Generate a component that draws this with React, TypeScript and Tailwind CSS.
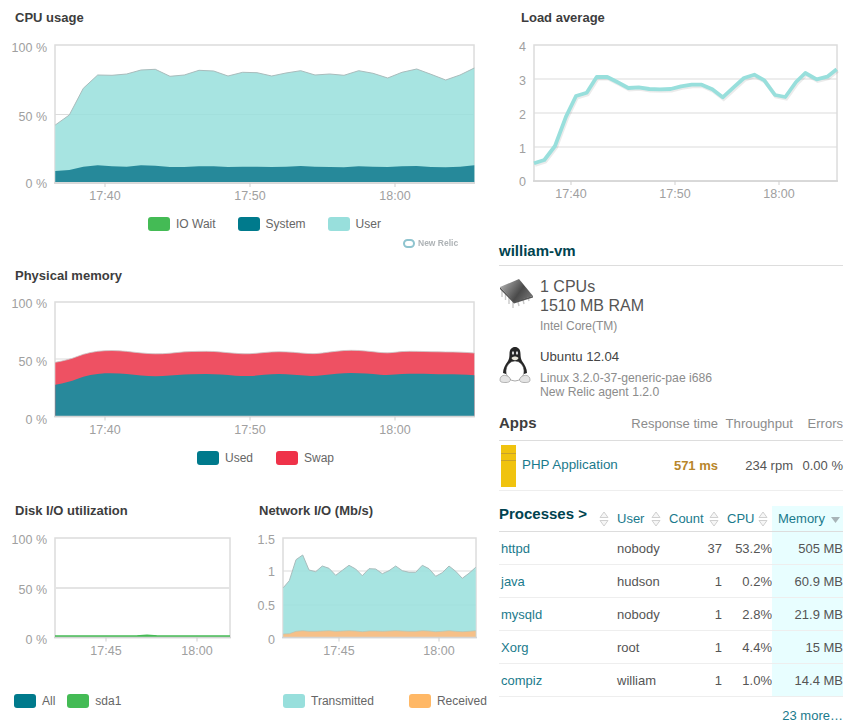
import React from "react";

type P = number[][];
const z = (pts: P, ox: number, oy: number) => pts.map(([x, y]) => [x / 3 + ox, y / 3 + oy]);
const line = (pts: P) => pts.map(([x, y]) => `${x.toFixed(1)},${y.toFixed(1)}`).join(" ");
const area = (pts: P, bottom: number) =>
  `${pts[0][0].toFixed(1)},${bottom} ${line(pts)} ${pts[pts.length - 1][0].toFixed(1)},${bottom}`;
const smooth = (pts: P) => {
  let d = `M${pts[0][0].toFixed(1)} ${pts[0][1].toFixed(1)}`;
  for (let i = 1; i < pts.length - 1; i++) {
    const mx = (pts[i][0] + pts[i + 1][0]) / 2;
    const my = (pts[i][1] + pts[i + 1][1]) / 2;
    d += ` Q${pts[i][0].toFixed(1)} ${pts[i][1].toFixed(1)} ${mx.toFixed(1)} ${my.toFixed(1)}`;
  }
  const l = pts[pts.length - 1];
  return `${d} L${l[0].toFixed(1)} ${l[1].toFixed(1)}`;
};
const smoothArea = (pts: P, bottom: number) =>
  `${smooth(pts)} L${pts[pts.length - 1][0].toFixed(1)} ${bottom} L${pts[0][0].toFixed(1)} ${bottom} Z`;

const xs = [166, 208, 250, 293, 336, 380, 423, 466, 510, 553, 597, 641, 684, 728, 771, 815, 858, 902, 945, 989, 1032, 1076, 1119, 1163, 1206, 1250, 1293, 1337, 1380, 1423];
const withX = (ys: number[]) => ys.map((y, i) => [xs[i], y]);

const cpuUser = z(withX([375, 345, 265, 225, 226, 222, 210, 208, 229, 225, 211, 213, 228, 217, 218, 228, 219, 212, 225, 222, 226, 212, 220, 234, 217, 207, 223, 240, 225, 204]), 0, 0);
const cpuSys = z(withX([513, 510, 500, 496, 499, 500, 496, 497, 501, 501, 499, 499, 501, 500, 500, 501, 500, 498, 500, 501, 502, 499, 500, 501, 499, 498, 501, 502, 500, 496]), 0, 0);
const memSwap = z(withX([307, 299, 282, 273, 271, 274, 279, 282, 280, 275, 274, 274, 278, 282, 280, 275, 275, 279, 282, 276, 271, 271, 275, 280, 274, 274, 275, 276, 276, 279]), 0, 260);
const memUsed = z(withX([374, 367, 349, 341, 339, 342, 347, 349, 347, 343, 342, 342, 345, 349, 347, 342, 342, 346, 349, 343, 339, 339, 342, 346, 341, 341, 342, 343, 343, 346]), 0, 260);
const load = z([[132, 490], [163, 480], [195, 438], [228, 350], [258, 288], [290, 278], [320, 231], [352, 231], [383, 247], [415, 264], [446, 262], [478, 267], [510, 268], [542, 267], [573, 259], [605, 254], [635, 254], [667, 268], [698, 292], [730, 263], [762, 234], [793, 224], [823, 241], [855, 285], [886, 291], [918, 246], [946, 219], [980, 238], [1012, 230], [1040, 208]], 490, 0);
const netX = [850, 868, 888, 908, 927, 947, 967, 987, 1007, 1027, 1047, 1067, 1087, 1107, 1127, 1147, 1167, 1187, 1207, 1227, 1247, 1267, 1287, 1307, 1327, 1347, 1367, 1387, 1407, 1427];
const netT = z([293, 272, 209, 195, 240, 245, 228, 235, 256, 241, 226, 237, 257, 236, 237, 251, 242, 228, 242, 247, 247, 226, 236, 259, 248, 228, 244, 265, 250, 232].map((y, i) => [netX[i], y]), 0, 490);
const netR = z([432, 431, 424, 422, 424, 424, 423, 422, 424, 423, 422, 423, 425, 423, 423, 424, 423, 422, 423, 424, 424, 422, 423, 425, 424, 422, 424, 425, 424, 422].map((y, i) => [netX[i], y]), 0, 490);

type ChartProps = {
  vx: number; vy: number; w: number; h: number;
  x0: number; x1: number; y0: number; y1: number;
  yl: [string, number][]; grid: number[]; ticks: [string, number][];
  children?: React.ReactNode; gridW?: number; gridC?: string;
};

function Chart({ vx, vy, w, h, x0, x1, y0, y1, yl, grid, ticks, children, gridW = 1.2, gridC = "#dcdcdc" }: ChartProps) {
  return (
    <svg width={w} height={h} viewBox={`${vx} ${vy} ${w} ${h}`} className="block">
      <rect x={x0} y={y0} width={x1 - x0} height={y1 - y0} fill="#fff" stroke="#dcdcdc" strokeWidth="1.5" />
      {grid.map((g) => (
        <line key={g} x1={x0} x2={x1} y1={g} y2={g} stroke={gridC} strokeWidth={gridW} />
      ))}
      {children}
      <line x1={x0 - 1} x2={x1 + 1} y1={y1} y2={y1} stroke="#d4d4d4" strokeWidth="1.5" />
      {yl.map(([t, y]) => (
        <text key={t} x={x0 - 8} y={y + 1} textAnchor="end" fontSize="12.5" fill="#a0a0a0" dominantBaseline="middle">{t}</text>
      ))}
      {ticks.map(([t, x]) => (
        <g key={t}>
          <line x1={x} x2={x} y1={y1} y2={y1 + 4} stroke="#cfcfcf" />
          <text x={x} y={y1 + 14} textAnchor="middle" fontSize="12.5" fill="#a0a0a0" dominantBaseline="middle">{t}</text>
        </g>
      ))}
    </svg>
  );
}

function Swatch({ className, label, textClass = "" }: { className: string; label: string; textClass?: string }) {
  return (
    <div className={`flex items-center gap-[6px] ${textClass}`}>
      <span className={`block h-[14px] w-[22px] rounded-[3px] ${className}`} />
      <span className="text-[12px] leading-4 text-[#666]">{label}</span>
    </div>
  );
}

function Title({ children, className = "" }: { children: React.ReactNode; className?: string }) {
  return <h3 className={`text-[13px] font-bold leading-4 text-[#3d3d3d] ${className}`}>{children}</h3>;
}

function Chip() {
  return (
    <svg width="35" height="32" viewBox="499 278 35 32" className="block shrink-0">
      <defs>
        <linearGradient id="chipG" x1="0" y1="0" x2="1" y2="0.5">
          <stop offset="0" stopColor="#c4c4c4" />
          <stop offset="0.3" stopColor="#8a8a8a" />
          <stop offset="0.7" stopColor="#4a4a4a" />
          <stop offset="1" stopColor="#6a6a6a" />
        </linearGradient>
      </defs>
      <g stroke="#c8c8c8" strokeWidth="1.4">
        <line x1="502" y1="291" x2="502" y2="298" />
        <line x1="505.5" y1="295" x2="505.5" y2="301" />
        <line x1="509" y1="298" x2="509" y2="305" />
        <line x1="513" y1="302" x2="513" y2="309" />
        <line x1="518" y1="303" x2="519" y2="307" />
        <line x1="523" y1="301" x2="524" y2="305" />
        <line x1="528" y1="298" x2="529" y2="302" />
      </g>
      <polygon points="500,288 500,290 514,304.5 533,298.5 533,297 514,302" fill="#555" />
      <polygon points="500,288 519,280 533,297 514,303" fill="url(#chipG)" />
    </svg>
  );
}

function Tux() {
  return (
    <svg width="32" height="38" viewBox="500 344 32 38" className="block shrink-0">
      <path d="M510.5 352 C510.5 347 513 345 516 345 C519 345 521.5 347 521.5 352 C521.5 355 522 357 523 359 C526 363 528 367 528 371 L525 372 C525 366 522 362 516 362 C510 362 507 366 507 372 L504 371 C504 367 506 363 509 359 C510 357 510.5 355 510.5 352 Z" fill="#262626" />
      <ellipse cx="516" cy="369" rx="9" ry="10" fill="#fff" stroke="#555" strokeWidth="0.5" />
      <path d="M512.5 356 C514 354 518 354 519.5 356 C518.5 359 513.5 359 512.5 356 Z" fill="#e9e6da" />
      <ellipse cx="514" cy="351" rx="1.1" ry="1.7" fill="#ddd" />
      <ellipse cx="518" cy="351" rx="1.1" ry="1.7" fill="#ddd" />
      <path d="M501 378 C501 373 506 372 510 375 C513 378 511 380.5 507 380.5 C504 380.5 501 380.5 501 378 Z" fill="#e4e4e4" stroke="#8a8a8a" strokeWidth="0.6" />
      <path d="M531 378 C531 373 526 372 522 375 C519 378 521 380.5 525 380.5 C528 380.5 531 380.5 531 378 Z" fill="#e4e4e4" stroke="#8a8a8a" strokeWidth="0.6" />
    </svg>
  );
}

function Sort() {
  return (
    <svg width="10" height="16" viewBox="0 0 10 16" className="block shrink-0">
      <path d="M5 1 L9 6.5 H1 Z M1 9.5 H9 L5 15 Z" fill="#f6f6f6" stroke="#d0d0d0" strokeWidth="1" />
    </svg>
  );
}

const rows = [
  ["httpd", "nobody", "37", "53.2%", "505 MB"],
  ["java", "hudson", "1", "0.2%", "60.9 MB"],
  ["mysqld", "nobody", "1", "2.8%", "21.9 MB"],
  ["Xorg", "root", "1", "4.4%", "15 MB"],
  ["compiz", "william", "1", "1.0%", "14.4 MB"],
];

export default function App() {
  return (
    <div className="flex h-[727px] w-[859px] overflow-hidden bg-white font-['Liberation_Sans',Arial,sans-serif]">
      {/* Left column */}
      <div className="w-[499px] shrink-0">
        <section className="h-[258px]">
          <Title className="pl-[15px] pt-[10px]">CPU usage</Title>
          <div className="mt-[9px]">
            <Chart vx={0} vy={35} w={490} h={170} x0={55} x1={474} y0={45} y1={183}
              yl={[["100 %", 48], ["50 %", 117], ["0 %", 184]]} grid={[114.5]}
              ticks={[["17:40", 105], ["17:50", 250], ["18:00", 395]]}>
              <polygon points={area(cpuUser, 182)} fill="#98dfdc" fillOpacity="0.85" />
              <polyline points={line(cpuUser)} fill="none" stroke="#a9bcbc" strokeWidth="1" />
              <polygon points={area(cpuSys, 182)} fill="#26899a" />
            </Chart>
          </div>
          <div className="relative mt-[11px] flex pl-[148px]">
            <Swatch className="bg-[#44bb55]" label="IO Wait" />
            <Swatch className="bg-[#007a8c]" label="System" textClass="ml-[22px]" />
            <Swatch className="bg-[#98dfdc]" label="User" textClass="ml-[22px]" />
            <div className="absolute left-[403px] top-[21px] flex items-center gap-[3px] blur-[0.4px]">
              <span className="block h-[9px] w-[12px] rounded-full border-[2.5px] border-[#8fc4cf] bg-white" />
              <span className="text-[8.5px] font-bold leading-3 text-[#aeb3b6]">New Relic</span>
            </div>
          </div>
        </section>

        <section className="h-[227px]">
          <Title className="pl-[15px] pt-[10px]">Physical memory</Title>
          <div className="mt-[10px]">
            <Chart vx={0} vy={294} w={490} h={150} x0={55} x1={474} y0={302} y1={416.5}
              yl={[["100 %", 304], ["50 %", 362], ["0 %", 420]]} grid={[359]}
              ticks={[["17:40", 105], ["17:50", 250], ["18:00", 395]]}>
              <path d={smoothArea(memSwap, 416)} fill="#ee5163" />
              <path d={smooth(memSwap)} fill="none" stroke="#c9c9c9" strokeWidth="0.8" />
              <path d={smoothArea(memUsed, 416)} fill="#28899b" />
            </Chart>
          </div>
          <div className="mt-[6px] flex pl-[197px]">
            <Swatch className="bg-[#007a8c]" label="Used" />
            <Swatch className="bg-[#ef3249]" label="Swap" textClass="ml-[23px]" />
          </div>
        </section>

        <div className="flex">
          <section className="w-[244px]">
            <Title className="pl-[15px] pt-[18px]">Disk I/O utilization</Title>
            <div className="mt-[9px]">
              <Chart vx={0} vy={528} w={244} h={130} x0={55} x1={230} y0={538} y1={637.5} gridW={2} gridC="#e4e4e4"
                yl={[["100 %", 540], ["50 %", 590], ["0 %", 640]]} grid={[588]}
                ticks={[["17:45", 106], ["18:00", 197]]}>
                <line x1={55} x2={230} y1={636.5} y2={636.5} stroke="#44bb55" strokeWidth="2.5" />
                <ellipse cx={147} cy={635.6} rx={10} ry={1} fill="#44bb55" />
              </Chart>
            </div>
            <div className="mt-[35px] flex pl-[14px]">
              <Swatch className="bg-[#007a8c]" label="All" />
              <Swatch className="bg-[#44bb55]" label="sda1" textClass="ml-[12px]" />
            </div>
          </section>
          <section className="w-[255px]">
            <Title className="pl-[15px] pt-[18px]">Network I/O (Mb/s)</Title>
            <div className="mt-[9px]">
              <Chart vx={244} vy={528} w={255} h={130} x0={283} x1={476} y0={538} y1={637.5}
                yl={[["1.5", 540], ["1", 572], ["0.5", 606], ["0", 640]]} grid={[571, 605]}
                ticks={[["17:45", 339], ["18:00", 439]]}>
                <polygon points={area(netT, 637)} fill="#98dfdc" fillOpacity="0.85" />
                <polyline points={line(netT)} fill="none" stroke="#a9bcbc" strokeWidth="1" />
                <polygon points={area(netR, 637)} fill="#f6c088" />
                <polyline points={line(netR)} fill="none" stroke="#b8c4b4" strokeWidth="0.7" />
              </Chart>
            </div>
            <div className="mt-[35px] flex pl-[39px]">
              <Swatch className="bg-[#98dfdc]" label="Transmitted" />
              <Swatch className="bg-[#ffb866]" label="Received" textClass="ml-[35px]" />
            </div>
          </section>
        </div>
      </div>

      {/* Right column */}
      <div className="w-[344px] shrink-0">
        <Title className="pl-[22px] pt-[10px]">Load average</Title>
        <div className="mt-[9px]">
          <Chart vx={499} vy={35} w={344} h={170} x0={534} x1={837} y0={45} y1={181}
            yl={[["4", 47], ["3", 81], ["2", 115], ["1", 149], ["0", 182]]} grid={[79, 113, 147]}
            ticks={[["17:40", 571], ["17:50", 675], ["18:00", 779]]}>
            <polyline points={line(load.map(([x, y]) => [x + 1, y + 1.5]))} fill="none" stroke="#000" strokeOpacity="0.08" strokeWidth="4" />
            <polyline points={line(load)} fill="none" stroke="#98dfdc" strokeWidth="3.8" strokeLinejoin="round" />
          </Chart>
        </div>

        <h2 className="mt-[37px] border-b border-[#dddddd] pb-[5px] text-[15px] font-bold leading-[18px] text-[#00434f]">william-vm</h2>

        <div className="mt-[11px] flex gap-[6px]">
          <Chip />
          <div>
            <div className="text-[16px] leading-[19px] text-[#555]">1 CPUs</div>
            <div className="text-[16px] leading-[19px] text-[#555]">1510 MB RAM</div>
            <div className="mt-[4px] text-[12px] leading-[15px] text-[#8c8c8c]">Intel Core(TM)</div>
          </div>
        </div>

        <div className="mt-[12px] flex gap-[9px]">
          <Tux />
          <div className="pt-[3px]">
            <div className="text-[13.2px] leading-4 text-[#444]">Ubuntu 12.04</div>
            <div className="mt-[6px] text-[12.2px] leading-[14px] text-[#8c8c8c]">Linux 3.2.0-37-generic-pae i686</div>
            <div className="text-[12.2px] leading-[14px] text-[#8c8c8c]">New Relic agent 1.2.0</div>
          </div>
        </div>

        <div className="mt-[10px] flex h-[32px] items-center border-b border-[#dddddd] pb-[2px]">
          <h3 className="w-[132px] text-[15px] font-bold text-[#3d3d3d]">Apps</h3>
          <span className="w-[87px] whitespace-nowrap text-right text-[13px] text-[#8c8c8c]">Response time</span>
          <span className="w-[75px] whitespace-nowrap text-right text-[13.2px] text-[#8c8c8c]">Throughput</span>
          <span className="w-[50px] text-right text-[13px] text-[#8c8c8c]">Errors</span>
        </div>
        <div className="flex h-[50px] items-center border-b border-[#eeeeee]">
          <div className="ml-[2px] flex h-[42px] w-[15px] shrink-0 flex-col bg-[#f0c30f] pt-[8px]">
            <span className="block h-px bg-[#c9a22a]" />
            <span className="mt-[6px] block h-px bg-[#c9a22a]" />
          </div>
          <span className="ml-[6px] w-[107px] whitespace-nowrap text-[13.4px] text-[#1a7a8c]">PHP Application</span>
          <span className="w-[89px] text-right text-[13px] font-bold text-[#b8862b]">571 ms</span>
          <span className="w-[75px] text-right text-[13px] text-[#555]">234 rpm</span>
          <span className="w-[50px] text-right text-[13px] text-[#555]">0.00 %</span>
        </div>

        <div className="mt-[15px] flex h-[26px] border-b border-[#dddddd]">
          <h3 className="w-[100px] shrink-0 text-[15px] font-bold leading-4 text-[#00434f]">Processes &gt;</h3>
          <div className="flex w-[173px] items-center pt-[1px] text-[13px] text-[#1a7a8c]">
            <Sort />
            <span className="ml-[8px] w-[34px]">User</span>
            <Sort />
            <span className="ml-[8px] w-[40px]">Count</span>
            <Sort />
            <span className="ml-[8px] w-[31px]">CPU</span>
            <Sort />
          </div>
          <div className="flex w-[71px] items-center bg-[#e8feff] pl-[6px] text-[13px] text-[#1a7a8c]">
            <span>Memory</span>
            <svg width="9" height="6" viewBox="0 0 9 6" className="ml-[6px] mt-[3px] shrink-0"><path d="M0 0 H9 L4.5 6 Z" fill="#a8b4b8" /></svg>
          </div>
        </div>
        {rows.map((r) => (
          <div key={r[0]} className="flex h-[33px] items-center border-b border-[#eeeeee] text-[13px] text-[#555]">
            <span className="w-[118px] pl-[2px] pt-[2px] text-[#1a7a8c]">{r[0]}</span>
            <span className="w-[56px] pt-[2px]">{r[1]}</span>
            <span className="w-[49px] pt-[2px] text-right">{r[2]}</span>
            <span className="w-[50px] pt-[2px] text-right">{r[3]}</span>
            <span className="flex h-full w-[71px] items-center justify-end bg-[#e8feff] pt-[2px]">{r[4]}</span>
          </div>
        ))}
        <div className="mt-[11px] text-right text-[13px] leading-4 text-[#1a7a8c]">23 more…</div>
      </div>
    </div>
  );
}
